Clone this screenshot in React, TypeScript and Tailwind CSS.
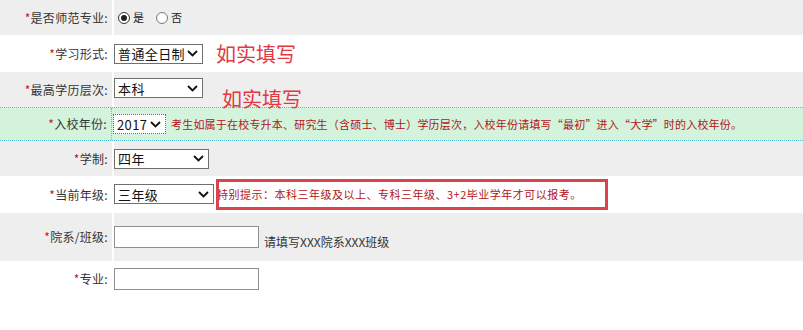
import React from "react";

const font = { fontFamily: '"Noto Sans CJK SC", "Liberation Sans", sans-serif' };

function Chevron() {
  return (
    <svg width="11" height="7" viewBox="0 0 11 7" className="shrink-0">
      <path d="M1 1 L5.5 5.5 L10 1" fill="none" stroke="#111" strokeWidth="1.8" />
    </svg>
  );
}

function Select({ value, width, dotted }: { value: string; width: string; dotted?: boolean }) {
  return (
    <div
      className={`flex h-[20px] items-center justify-between overflow-hidden bg-white pl-[3px] pr-[4px] text-[13px] leading-none tracking-[0.4px] text-[#111] ${width} ${
        dotted ? "border border-dotted border-[#3d6fa0]" : "border border-[#6f6f6f]"
      }`}
    >
      <span className="whitespace-nowrap">{value}</span>
      <Chevron />
    </div>
  );
}

function Label({ text }: { text: string }) {
  return (
    <span className="whitespace-nowrap text-[12px] tracking-[0.3px] text-[#333]">
      <span className="text-[#c4161c]">*</span>
      {text}:
    </span>
  );
}

function Row({
  label,
  bg,
  h,
  children,
}: {
  label: string;
  bg: string;
  h: string;
  children: React.ReactNode;
}) {
  return (
    <div className={`flex ${h}`}>
      <div className={`flex w-[112px] shrink-0 items-center justify-end pr-[4px] ${bg}`}>
        <Label text={label} />
      </div>
      <div className={`ml-[2px] flex flex-1 items-center ${bg}`}>{children}</div>
    </div>
  );
}

function Radio({ checked }: { checked?: boolean }) {
  return (
    <span
      className={`inline-flex h-[12px] w-[12px] items-center justify-center rounded-full border bg-white ${
        checked ? "border-[#333]" : "border-[#777]"
      }`}
    >
      {checked && <span className="h-[6px] w-[6px] rounded-full bg-[#222]" />}
    </span>
  );
}

export default function App() {
  return (
    <div className="h-[330px] w-[803px] overflow-hidden bg-white" style={font}>
      <Row label="是否师范专业" bg="bg-[#eeeeee]" h="h-[35px]">
        <div className="ml-[4px] flex items-center gap-[3px] text-[11px] text-[#222]">
          <Radio checked />
          <span className="mr-[9px]">是</span>
          <Radio />
          <span>否</span>
        </div>
      </Row>
      <Row label="学习形式" bg="bg-white" h="h-[37px]">
        <Select value="普通全日制" width="w-[89px]" />
        <span className="ml-[13px] text-[20px] leading-none text-[#e2383f]">如实填写</span>
      </Row>
      <Row label="最高学历层次" bg="bg-[#eeeeee]" h="h-[35px]">
        <div className="-mt-[3px]">
          <Select value="本科" width="w-[89px]" />
        </div>
        <span className="ml-[19px] mt-[18px] text-[20px] leading-none text-[#e2383f]">如实填写</span>
      </Row>
      <div className="flex h-[34px] border-y border-dotted border-[#4fc0d6] bg-[#d3f3dc]">
        <div className="flex w-[112px] shrink-0 items-center justify-end border-r border-dotted border-[#4fc0d6] pr-[4px]">
          <Label text="入校年份" />
        </div>
        <div className="ml-[1px] flex flex-1 items-center">
          <Select value="2017" width="w-[53px]" dotted />
          <span className="ml-[5px] whitespace-nowrap text-[11px] tracking-[0.2px] text-[#b3141a]">
            考生如属于在校专升本、研究生（含硕士、博士）学历层次，入校年份请填写“最初”进入“大学”时的入校年份。
          </span>
        </div>
      </div>
      <Row label="学制" bg="bg-[#eeeeee]" h="h-[35px]">
        <Select value="四年" width="w-[95px]" />
      </Row>
      <Row label="当前年级" bg="bg-white" h="h-[37px]">
        <div className="-mt-[1px]">
          <Select value="三年级" width="w-[100px]" />
        </div>
        <div className="ml-[2px] flex h-[31px] w-[392px] items-center overflow-hidden border-[3px] border-[#d8454c]">
          <span className="-ml-[2px] whitespace-nowrap text-[11px] tracking-[0.5px] text-[#b3141a]">
            特别提示：本科三年级及以上、专科三年级、3+2毕业学年才可以报考。
          </span>
        </div>
      </Row>
      <Row label="院系/班级" bg="bg-[#eeeeee]" h="h-[48px]">
        <div className="h-[22px] w-[145px] border border-[#8f8f8f] bg-white" />
        <span className="ml-[5px] mt-[9px] text-[12px] text-[#333]">请填写XXX院系XXX班级</span>
      </Row>
      <Row label="专业" bg="bg-white" h="h-[35px]">
        <div className="h-[22px] w-[145px] border border-[#8f8f8f] bg-white" />
      </Row>
    </div>
  );
}
